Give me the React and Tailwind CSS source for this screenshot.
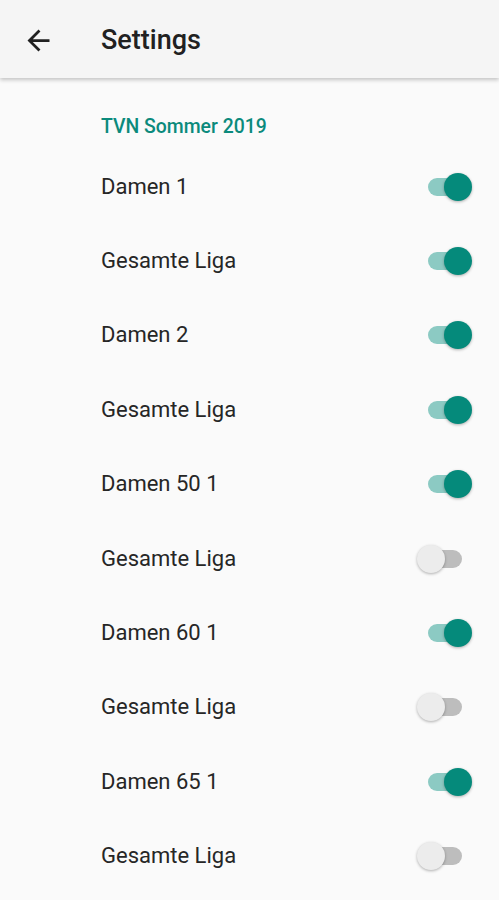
import { useState } from 'react';

const initial = [
    { label: 'Damen 1', on: true },
    { label: 'Gesamte Liga', on: true },
    { label: 'Damen 2', on: true },
    { label: 'Gesamte Liga', on: true },
    { label: 'Damen 50 1', on: true },
    { label: 'Gesamte Liga', on: false },
    { label: 'Damen 60 1', on: true },
    { label: 'Gesamte Liga', on: false },
    { label: 'Damen 65 1', on: true },
    { label: 'Gesamte Liga', on: false },
];

function Switch({ on, onToggle }) {
    return (
        <button type="button" onClick={onToggle} className="relative w-[55px] h-[28px] shrink-0">
            <span
                className={`absolute left-[11px] top-[5px] w-[34px] h-[18px] rounded-full ${on ? 'bg-[#8ccac3]' : 'bg-[#bdbdbd]'}`}
            />
            <span
                className={`absolute top-0 w-[28px] h-[28px] rounded-full shadow-[0_1px_3px_rgba(0,0,0,0.3)] ${on ? 'left-[27px] bg-[#058a7b]' : 'left-0 bg-[#ececec]'}`}
            />
        </button>
    );
}

export default function App() {
    const [rows, setRows] = useState(initial);

    const toggle = (i) => {
        setRows(rows.map((r, j) => (j === i ? { ...r, on: !r.on } : r)));
    };

    return (
        <div className="min-h-screen bg-[#fafafa] font-['Roboto',sans-serif]">
            {/* Toolbar */}
            <div className="h-[78px] bg-[#f5f5f5] flex items-center pt-[3px] shadow-[0_2px_4px_rgba(0,0,0,0.22)] relative z-10">
                <svg viewBox="0 0 24 24" className="w-[33px] h-[33px] ml-[22px] fill-[#212121]">
                    <path d="M20 11H7.83l5.59-5.59L12 4l-8 8 8 8 1.41-1.41L7.83 13H20v-2z" />
                </svg>
                <h1 className="ml-[46px] text-[27px] font-medium text-[#212121] leading-none">Settings</h1>
            </div>

            {/* Category */}
            <div className="h-[71px] flex items-end pb-[13px] pl-[101px]">
                <p className="text-[19.4px] font-medium text-[#0b8a7c] leading-none">TVN Sommer 2019</p>
            </div>

            {rows.map((row, i) => (
                <div key={i} className="h-[74.4px] flex items-center justify-between pl-[101px] pr-[27px] pt-[1px]">
                    <span className="text-[22px] text-[#262626] leading-none">{row.label}</span>
                    <Switch on={row.on} onToggle={() => toggle(i)} />
                </div>
            ))}
        </div>
    );
}
